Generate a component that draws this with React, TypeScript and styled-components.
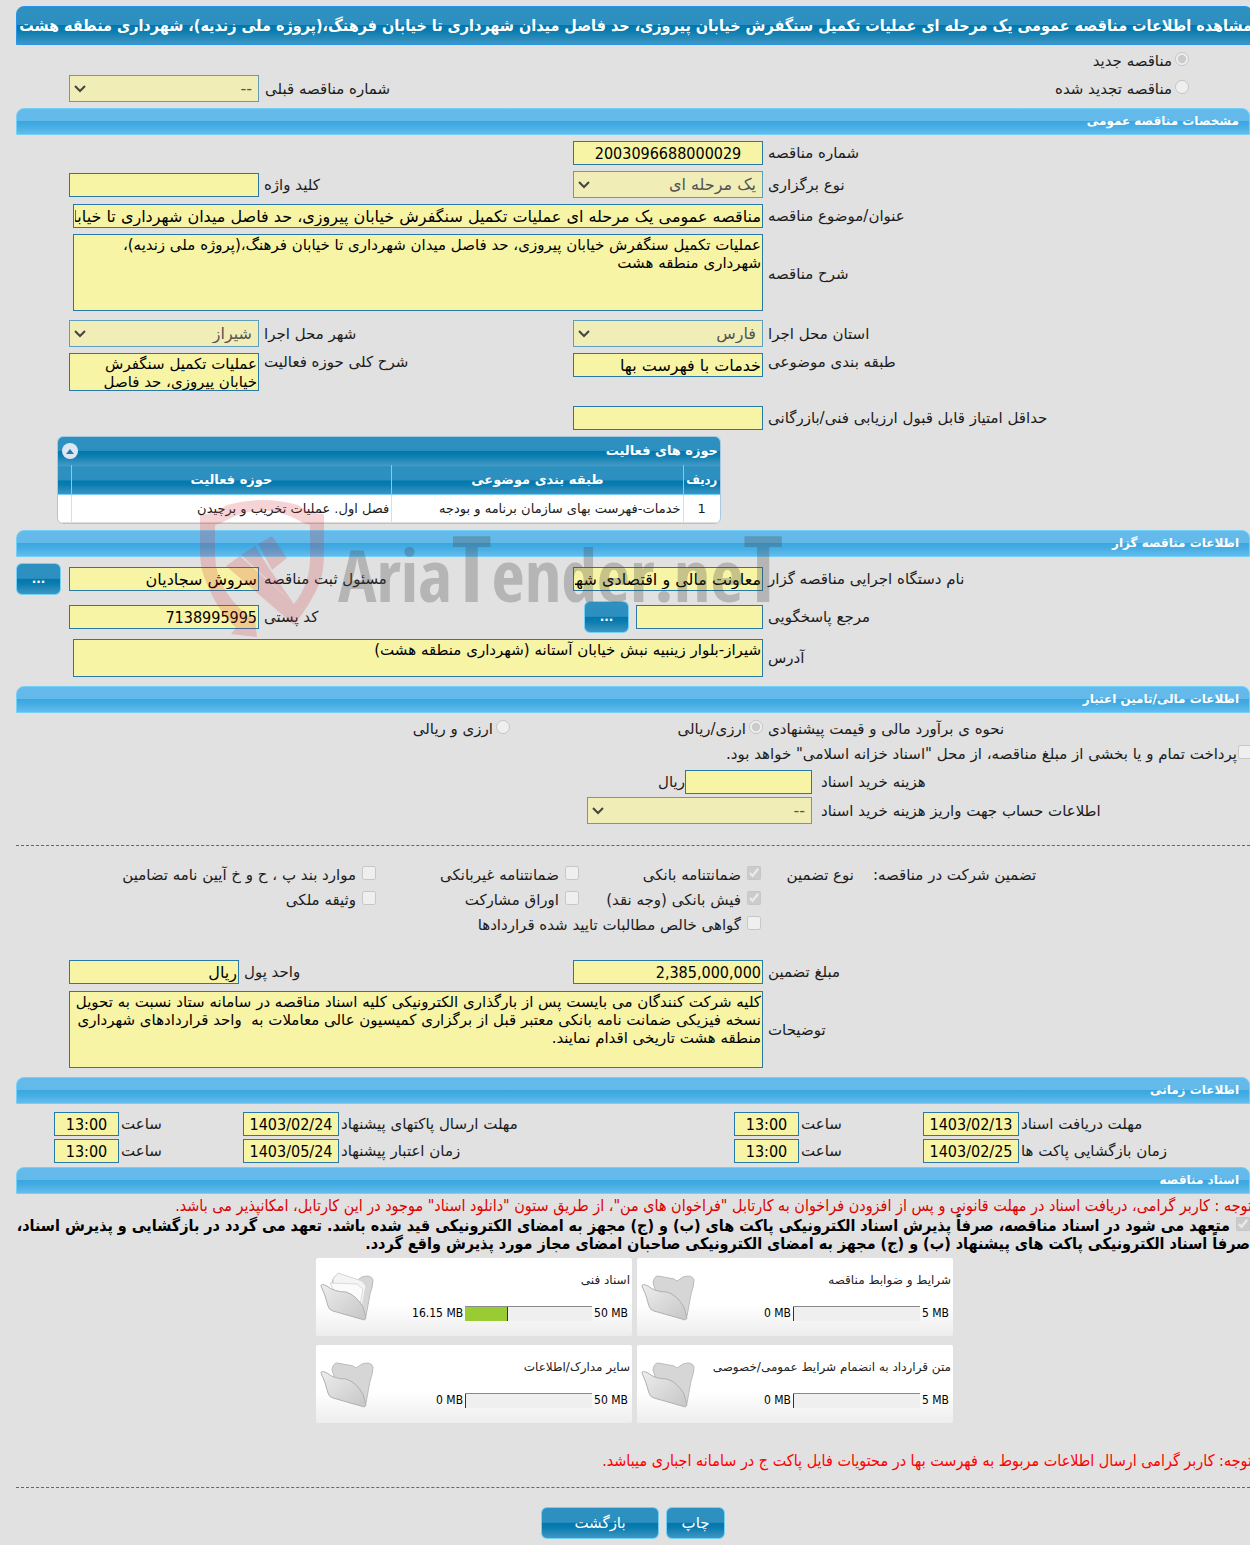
import React, { useId } from "react";
import styled, { createGlobalStyle, css } from "styled-components";

const colors = {
  page: "#e1e1e1",
  field: "#f7f4a5",
  fieldOff: "#f0eeb6",
  border: "#2779aa",
  borderOff: "#5f9dbd",
  text: "#1c1c1c",
};

const fonts = {
  text: '"DejaVu Sans", sans-serif',
  narrow: '"DejaVu Sans Condensed", "DejaVu Sans", sans-serif',
};

const deepGradient = "linear-gradient(#2d91c0 0, #2d8fbf 48%, #0078ae 50%, #0a7cb0 65%, #3f97c2 100%)";
const skyGradient = "linear-gradient(#63bbeb 0, #63b9ea 48%, #3aa7e1 50%, #45ace3 68%, #63bdee 100%)";

const GlobalStyle = createGlobalStyle`
  *, *::before, *::after { box-sizing: border-box; }
  body {
    margin: 0;
    background: ${colors.page};
    color: ${colors.text};
    font-family: ${fonts.text};
    font-size: 15px;
    line-height: 18px;
  }
  input, select, textarea, button { font-family: inherit; margin: 0; }
`;

const Page = styled.main`
  direction: rtl;
  padding: 6px 0 6px 16px;
  overflow: hidden;
`;

const TitleBar = styled.h1`
  display: flex;
  align-items: center;
  height: 39px;
  margin: 0 -3px 0 0;
  border: 1px solid #2694e8;
  border-radius: 8px 8px 0 0;
  background: ${deepGradient};
  color: #fff;
  font-family: ${fonts.narrow};
  font-size: 16px;
  font-weight: bold;
  white-space: nowrap;
`;

const Section = styled.section`
  position: relative;
`;

const SectionBar = styled.h2`
  height: 27px;
  margin: 0;
  padding: 0 10px;
  border: 1px solid #74d0f7;
  border-radius: 8px 8px 0 0;
  background: ${skyGradient};
  color: #fff;
  font-size: 12px;
  line-height: 25px;
  font-weight: bold;
`;

const FormGrid = styled.div<{ $rowGap?: number; $end?: number }>`
  display: grid;
  grid-template-columns: minmax(0, 482fr) 190px minmax(0, 304fr) 190px 48px;
  column-gap: 5px;
  row-gap: ${(p) => p.$rowGap ?? 6}px;
  align-items: center;
  padding: 6px 0 ${(p) => p.$end ?? 9}px;
`;

const Label = styled.label<{ $first?: boolean; $top?: boolean }>`
  text-align: left;
  white-space: nowrap;
  ${(p) => p.$first && css`grid-column: 1;`}
  ${(p) => p.$top && css`align-self: start;`}
`;

const fieldStyle = css`
  border: 1px solid ${colors.border};
  border-radius: 0;
  background: ${colors.field};
  color: #000;
`;

const TextBox = styled.input<{ $w?: number; $center?: boolean; $digits?: boolean; $top?: boolean }>`
  ${fieldStyle}
  width: ${(p) => (p.$w ? p.$w + "px" : "100%")};
  height: 24px;
  padding: 1px;
  font-family: ${(p) => (p.$digits ? fonts.narrow : fonts.text)};
  font-size: 16px;
  text-align: ${(p) => (p.$center ? "center" : "right")};
  ${(p) => p.$top && css`align-self: start;`}
`;

const TextArea = styled.textarea<{ $h: number; $after?: number }>`
  ${fieldStyle}
  display: block;
  width: 100%;
  height: ${(p) => p.$h}px;
  margin-bottom: ${(p) => p.$after ?? 0}px;
  padding: 1px;
  font-size: 15px;
  line-height: 18px;
  resize: none;
  overflow: hidden;
`;

const Wide = styled.div<{ $inset?: boolean }>`
  grid-column: 2 / 5;
  display: flex;
  padding-left: ${(p) => (p.$inset ? 4 : 0)}px;
`;

const SelectWrap = styled.div`
  position: relative;
  display: flex;
  svg {
    position: absolute;
    left: 5px;
    top: 9px;
    pointer-events: none;
  }
`;

const SelectBox = styled.select`
  appearance: none;
  width: 100%;
  height: 27px;
  padding: 0 6px 0 20px;
  border: 1px solid ${colors.borderOff};
  border-radius: 0;
  background: ${colors.fieldOff};
  color: #545454;
  font-size: 16px;
  opacity: 1;
`;

const Spacer = styled.div<{ $h: number }>`
  height: ${(p) => p.$h}px;
`;

const buttonStyle = css`
  border: 1px solid #74d0f7;
  border-radius: 6px;
  background: ${deepGradient};
  color: #fff;
  height: 32px;
`;

const MoreButton = styled.button`
  ${buttonStyle}
  width: 45px;
  padding: 0;
  font-size: 12px;
  font-weight: bold;
  justify-self: end;
`;

const ActionButton = styled.button<{ $w: number }>`
  ${buttonStyle}
  width: ${(p) => p.$w}px;
  font-size: 15px;
`;

const Choice = styled.label<{ $span?: number; $gap?: number }>`
  display: flex;
  align-items: center;
  gap: ${(p) => p.$gap ?? 6}px;
  white-space: nowrap;
  grid-column: ${(p) => (p.$span ? "span " + p.$span : "auto")};
  input {
    flex: none;
    align-self: flex-start;
    width: 14px;
    height: 14px;
  }
`;

const TenderKind = styled.div`
  display: grid;
  grid-template-columns: minmax(0, 61fr) minmax(0, 799fr) minmax(0, 131fr) 190px 53px;
  row-gap: 1px;
  padding: 3px 0 6px;
  align-items: center;
`;

const KindChoice = styled.div`
  grid-column: 2;
  padding: 4px 0;
`;

const PriorNumber = styled.div`
  display: grid;
  grid-template-columns: subgrid;
  grid-column: 3 / 5;
  align-items: center;
  label { padding-left: 6px; }
`;

/* Activity table */

const ActivityPanel = styled.div`
  width: calc(100% - 570px);
  min-width: 560px;
  margin: 0 auto 6px 41px;
  border: 1px solid #a6c9e2;
  border-radius: 6px;
  background: #fff;
  overflow: hidden;
`;

const ActivityHead = styled.div`
  display: flex;
  justify-content: space-between;
  align-items: center;
  height: 28px;
  padding: 0 2px 0 4px;
  background: ${deepGradient};
  color: #fff;
  font-size: 13px;
  font-weight: bold;
`;

const CollapseButton = styled.button`
  display: grid;
  place-items: center;
  width: 16px;
  height: 16px;
  padding: 0;
  border: 0;
  border-radius: 8px;
  background: #dbe8f4;
`;

const ActivityTable = styled.table`
  width: 100%;
  border-collapse: collapse;
  table-layout: fixed;
  th {
    height: 29px;
    padding: 0;
    border-top: 1px solid #4297d7;
    border-bottom: 1px solid #74d0f7;
    border-left: 1px solid #74d0f7;
    background: ${deepGradient};
    color: #fff;
    font-size: 13px;
    font-weight: bold;
    white-space: nowrap;
  }
  th:first-child { font-family: ${fonts.narrow}; }
  td {
    height: 28px;
    padding: 0 2px;
    border-left: 1px solid #dddddd;
    border-bottom: 1px solid #dddddd;
    font-size: 13px;
    white-space: nowrap;
    overflow: hidden;
  }
  th:last-child, td:last-child { border-left: 0; }
  td:first-child { text-align: center; }
`;

/* Watermark over the organiser section */

const Watermark = styled.svg`
  position: absolute;
  left: 184px;
  top: -32px;
  width: 620px;
  height: 140px;
  pointer-events: none;
`;

/* Finance section */

const MethodRow = styled.div`
  display: grid;
  grid-template-columns: minmax(0, 482fr) minmax(0, 248fr) minmax(0, 494fr);
  column-gap: 5px;
  align-items: center;
  height: 25px;
  margin-top: 3px;
`;

const Bleed = styled.div`
  display: flex;
  align-items: center;
  height: 25px;
  margin-right: -2px;
`;

const PurchaseGrid = styled.div`
  display: grid;
  grid-template-columns: minmax(0, 429fr) 225px minmax(0, 562fr);
  column-gap: 9px;
  row-gap: 3px;
  align-items: center;
  padding: 4px 0 21px;
`;

const FieldPair = styled.div`
  display: flex;
  align-items: center;
  gap: 7px;
`;

const CurrencyCell = styled.div`
  grid-column: 3 / 5;
  display: flex;
  align-items: center;
  justify-content: flex-end;
  gap: 5px;
`;

const AmountCell = styled.div`
  display: flex;
  align-items: center;
`;

const Divider = styled.hr`
  margin: 0;
  border: 0;
  border-top: 1px dashed ${colors.border};
`;

const GuaranteeGrid = styled.div`
  display: grid;
  grid-template-columns: minmax(0, 377fr) minmax(0, 112fr) minmax(0, 182fr) minmax(0, 203fr) minmax(0, 360fr);
  grid-auto-rows: 25px;
  align-items: center;
  padding: 16px 0 17px;
`;

const GroupTitle = styled.span`
  text-align: left;
`;

const GroupKind = styled.span`
  padding-right: 19px;
`;

/* Timing */

const TimeGrid = styled.div`
  display: grid;
  grid-template-columns:
    minmax(0, 229fr) 96px minmax(0, 120fr) 65px minmax(0, 391fr) 96px minmax(0, 120fr) 65px minmax(0, 36fr);
  gap: 3px 2px;
  align-items: center;
  padding: 8px 0 4px;
  ${Label}:nth-of-type(4n + 1) { grid-column: 1; }
`;

/* Documents */

const Notice = styled.p<{ $bright?: boolean }>`
  margin: 0 -2px 0 0;
  color: ${(p) => (p.$bright ? "#ff0000" : "#dd0000")};
  font-family: ${fonts.narrow};
  font-size: 16px;
  line-height: 23px;
  white-space: nowrap;
`;

const Pledge = styled.label`
  display: block;
  color: #000;
  font-family: ${fonts.narrow};
  font-size: 16px;
  font-weight: bold;
  line-height: 18px;
  input {
    width: 14px;
    height: 14px;
    margin-left: 1px;
    vertical-align: 0;
  }
`;

const CardGrid = styled.div`
  display: grid;
  grid-template-columns: 316px 316px;
  justify-content: center;
  gap: 9px 5px;
  padding: 5px 0 26px 3px;
`;

const Card = styled.article`
  display: flex;
  justify-content: space-between;
  height: 78px;
  padding: 14px 2px 0 4px;
  border-radius: 2px;
  background: linear-gradient(#ffffff 0, #ffffff 60%, #ededed 100%);
  color: #000;
`;

const CardBody = styled.div`
  font-family: ${fonts.narrow};
  font-size: 12px;
  line-height: 16px;
`;

const CardTitle = styled.h3`
  margin: 0 0 17px;
  font-family: ${fonts.text};
  font-size: 12px;
  font-weight: normal;
  color: #222;
`;

const Usage = styled.div`
  display: flex;
  direction: ltr;
  justify-content: flex-end;
  align-items: center;
  gap: 2px;
  padding-right: 2px;
`;

const Track = styled.div`
  width: 127px;
  height: 15px;
  border-top: 1px solid #8a8a8a;
  background: #efefef;
`;

const Fill = styled.div`
  height: 100%;
  border-right: 1px solid #333;
  background: #99cc33;
`;

const Actions = styled.div`
  display: flex;
  justify-content: center;
  gap: 7px;
  padding-top: 19px;
`;

function Select({ id, value }: { id: string; value: string }) {
  return (
    <SelectWrap>
      <SelectBox id={id} disabled defaultValue={value}>
        <option>{value}</option>
      </SelectBox>
      <svg width="12" height="10" viewBox="0 0 12 10" fill="none" stroke="#444" strokeWidth="2">
        <path d="M1 2 L6 7 L11 2" />
      </svg>
    </SelectWrap>
  );
}

function Tick({ text, checked, span }: { text: string; checked?: boolean; span?: number }) {
  return (
    <Choice $span={span}>
      <input type="checkbox" disabled defaultChecked={checked} />
      {text}
    </Choice>
  );
}

function TimePair({ name, date, time }: { name: string; date: string; time: string }) {
  const id = useId();
  return (
    <>
      <Label htmlFor={id + "d"}>{name}</Label>
      <TextBox id={id + "d"} readOnly $center $digits defaultValue={date} />
      <Label htmlFor={id + "t"}>ساعت</Label>
      <TextBox id={id + "t"} readOnly $center $digits defaultValue={time} />
    </>
  );
}

function Folder({ filled }: { filled?: boolean }) {
  const id = useId();
  return (
    <svg width="54" height="50" viewBox="0 0 54 50">
      <defs>
        <linearGradient id={id} x1="0" y1="0" x2="1" y2="1">
          <stop offset="0" stopColor="#ededed" />
          <stop offset="1" stopColor="#c6c6c6" />
        </linearGradient>
      </defs>
      <path
        d="M12 11 Q13 4 17 4 L28 6 Q33 6 36 9 L42 5 Q51 2 53 8 Q53 14 50 22 L46 44 L20 34 Z"
        fill="#d6d6d6"
        stroke="#bcbcbc"
      />
      {filled && (
        <>
          <path d="M13 7 L18 1 L42 9 L46 14 L42 35 L15 22 Z" fill="#f4f4f4" stroke="#d6d6d6" />
          <path d="M10 11 L37 12 L43 17 L40 33 L16 22 Z" fill="#fbfbfb" stroke="#dadada" />
        </>
      )}
      <path
        d="M1 14 Q1 11 7 14 Q14 20 26 20 Q36 23 43 35 L46 46 Q45 49 41 47 L13 39 Q9 38 8 34 Q5 22 1 14 Z"
        fill={`url(#${id})`}
        stroke="#b0b0b0"
      />
    </svg>
  );
}

const documents = [
  { title: "شرایط و ضوابط مناقصه", used: "0 MB", limit: "5 MB", share: 0 },
  { title: "اسناد فنی", used: "16.15 MB", limit: "50 MB", share: 34 },
  { title: "متن قرارداد به انضمام شرایط عمومی/خصوصی", used: "0 MB", limit: "5 MB", share: 0 },
  { title: "سایر مدارک/اطلاعات", used: "0 MB", limit: "50 MB", share: 0 },
];

export default function App() {
  return (
    <Page dir="rtl" lang="fa">
      <GlobalStyle />
      <TitleBar>
        مشاهده اطلاعات مناقصه عمومی یک مرحله ای عملیات تکمیل سنگفرش خیابان پیروزی، حد فاصل میدان شهرداری تا خیابان فرهنگ،(پروژه ملی زندیه)، شهرداری منطقه هشت
      </TitleBar>

      <TenderKind>
        <KindChoice>
          <Choice $gap={3}>
            <input type="radio" name="kind" disabled defaultChecked />
            مناقصه جدید
          </Choice>
        </KindChoice>
        <KindChoice>
          <Choice $gap={3}>
            <input type="radio" name="kind" disabled />
            مناقصه تجدید شده
          </Choice>
        </KindChoice>
        <PriorNumber>
          <Label htmlFor="prior">شماره مناقصه قبلی</Label>
          <Select id="prior" value="--" />
        </PriorNumber>
      </TenderKind>

      <Section>
        <SectionBar>مشخصات مناقصه عمومی</SectionBar>
        <FormGrid $end={6}>
          <Label $first htmlFor="number">شماره مناقصه</Label>
          <TextBox id="number" readOnly $center $digits defaultValue="2003096688000029" />

          <Label $first htmlFor="type">نوع برگزاری</Label>
          <Select id="type" value="یک مرحله ای" />
          <Label htmlFor="keyword">کلید واژه</Label>
          <TextBox id="keyword" readOnly />

          <Label $first htmlFor="subject">عنوان/موضوع مناقصه</Label>
          <Wide $inset>
            <TextBox
              id="subject"
              readOnly
              defaultValue="مناقصه عمومی یک مرحله ای عملیات تکمیل سنگفرش خیابان پیروزی، حد فاصل میدان شهرداری تا خیابان فرهنگ،(پروژه ملی زندیه)، شهرداری منطقه هشت"
            />
          </Wide>

          <Label $first htmlFor="description">شرح مناقصه</Label>
          <Wide $inset>
            <TextArea
              id="description"
              readOnly
              $h={77}
              $after={3}
              defaultValue="عملیات تکمیل سنگفرش خیابان پیروزی، حد فاصل میدان شهرداری تا خیابان فرهنگ،(پروژه ملی زندیه)، شهرداری منطقه هشت"
            />
          </Wide>

          <Label $first htmlFor="province">استان محل اجرا</Label>
          <Select id="province" value="فارس" />
          <Label htmlFor="city">شهر محل اجرا</Label>
          <Select id="city" value="شیراز" />

          <Label $first $top htmlFor="category">طبقه بندی موضوعی</Label>
          <TextBox id="category" readOnly $top defaultValue="خدمات با فهرست بها" />
          <Label $top htmlFor="field">شرح کلی حوزه فعالیت</Label>
          <TextArea id="field" readOnly $h={38} $after={9} defaultValue="عملیات تکمیل سنگفرش خیابان پیروزی، حد فاصل" />

          <Label $first htmlFor="score">حداقل امتیاز قابل قبول ارزیابی فنی/بازرگانی</Label>
          <TextBox id="score" readOnly />
        </FormGrid>

        <ActivityPanel>
          <ActivityHead>
            حوزه های فعالیت
            <CollapseButton aria-label="بستن">
              <svg width="8" height="5" viewBox="0 0 8 5"><path d="M0 5 L4 0 L8 5 Z" fill="#2779aa" /></svg>
            </CollapseButton>
          </ActivityHead>
          <ActivityTable>
            <colgroup>
              <col style={{ width: 37 }} />
              <col style={{ width: "44%" }} />
              <col />
              <col style={{ width: 13 }} />
            </colgroup>
            <thead>
              <tr>
                <th>ردیف</th>
                <th>طبقه بندی موضوعی</th>
                <th>حوزه فعالیت</th>
                <th />
              </tr>
            </thead>
            <tbody>
              <tr>
                <td>1</td>
                <td>خدمات-فهرست بهای سازمان برنامه و بودجه</td>
                <td>فصل اول. عملیات تخریب و برچیدن</td>
                <td />
              </tr>
            </tbody>
          </ActivityTable>
        </ActivityPanel>
      </Section>

      <Section>
        <SectionBar>اطلاعات مناقصه گزار</SectionBar>
        <FormGrid>
          <Label $first htmlFor="agency">نام دستگاه اجرایی مناقصه گزار</Label>
          <TextBox id="agency" readOnly defaultValue="معاونت مالی و اقتصادی شهرداری شیراز" />
          <Label htmlFor="registrar">مسئول ثبت مناقصه</Label>
          <TextBox id="registrar" readOnly defaultValue="سروش سجادیان" />
          <MoreButton>...</MoreButton>

          <Label $first htmlFor="contact">مرجع پاسخگویی</Label>
          <FieldPair>
            <TextBox id="contact" readOnly $w={127} />
            <MoreButton>...</MoreButton>
          </FieldPair>
          <Label htmlFor="postcode">کد پستی</Label>
          <TextBox id="postcode" readOnly $digits defaultValue="7138995995" />

          <Label $first htmlFor="address">آدرس</Label>
          <Wide $inset>
            <TextArea id="address" readOnly $h={38} defaultValue="شیراز-بلوار زینبیه نبش خیابان آستانه (شهرداری منطقه هشت)" />
          </Wide>
        </FormGrid>
        <Watermark viewBox="0 0 620 140" aria-hidden="true">
          <g fill="#d22630" fillOpacity="0.2">
            <path
              fillRule="evenodd"
              d="M0 17 Q14 16 27 7 Q62 -3 98 7 Q110 16 124 16 V55 Q124 72 120 84 Q112 104 94 127 L26 68 L40 58 L94 106 Q110 86 110 60 V27 Q104 26 98 22 Q62 3 27 22 Q21 26 15 27 V55 Q15 78 27 95 Q38 112 55 122 L57 139 L31 136 L36 130 Q16 110 8 88 Q0 72 0 55 Z"
            />
            <path d="M41 57 L55 48 L71 73 L94 106 Z" />
            <path d="M58 46 L72 38 L87 60 L72 72 Z" />
          </g>
          <text
            x="138"
            y="104"
            direction="ltr"
            textAnchor="start"
            fill="#444"
            fillOpacity="0.28"
            fontFamily="'Open Sans Condensed', 'Liberation Sans Narrow', Roboto, sans-serif"
            fontWeight="bold"
            fontSize="72"
          >
            Aria<tspan fontSize="92">T</tspan>ender.ne<tspan fontSize="92">T</tspan>
          </text>
        </Watermark>
      </Section>

      <Section>
        <SectionBar>اطلاعات مالی/تامین اعتبار</SectionBar>
        <MethodRow>
          <GroupTitle>نحوه ی برآورد مالی و قیمت پیشنهادی</GroupTitle>
          <Choice $gap={3}>
            <input type="radio" name="method" disabled defaultChecked />
            ارزی/ریالی
          </Choice>
          <Choice $gap={3}>
            <input type="radio" name="method" disabled />
            ارزی و ریالی
          </Choice>
        </MethodRow>
        <Bleed>
          <Choice $gap={1}>
            <input type="checkbox" disabled />
            پرداخت تمام و یا بخشی از مبلغ مناقصه، از محل "اسناد خزانه اسلامی" خواهد بود.
          </Choice>
        </Bleed>
        <PurchaseGrid>
          <Label $first htmlFor="docfee">هزینه خرید اسناد</Label>
          <AmountCell>
            <TextBox id="docfee" readOnly $w={127} />
            ریال
          </AmountCell>
          <Label $first htmlFor="account">اطلاعات حساب جهت واریز هزینه خرید اسناد</Label>
          <Select id="account" value="--" />
        </PurchaseGrid>
        <Divider />
        <GuaranteeGrid>
          <GroupTitle>تضمین شرکت در مناقصه:</GroupTitle>
          <GroupKind>نوع تضمین</GroupKind>
          <Tick text="ضمانتنامه بانکی" checked />
          <Tick text="ضمانتنامه غیربانکی" />
          <Tick text="موارد بند پ ، ح و خ آیین نامه تضامین" />
          <span />
          <span />
          <Tick text="فیش بانکی (وجه نقد)" checked />
          <Tick text="اوراق مشارکت" />
          <Tick text="وثیقه ملکی" />
          <span />
          <span />
          <Tick text="گواهی خالص مطالبات تایید شده قراردادها" span={3} />
        </GuaranteeGrid>
        <FormGrid $rowGap={7}>
          <Label $first htmlFor="amount">مبلغ تضمین</Label>
          <TextBox id="amount" readOnly $digits defaultValue="2,385,000,000" />
          <CurrencyCell>
            <Label htmlFor="currency">واحد پول</Label>
            <TextBox id="currency" readOnly $w={170} defaultValue="ریال" />
          </CurrencyCell>

          <Label $first htmlFor="notes">توضیحات</Label>
          <Wide>
            <TextArea
              id="notes"
              readOnly
              $h={77}
              defaultValue="کلیه شرکت کنندگان می بایست پس از بارگذاری الکترونیکی کلیه اسناد مناقصه در سامانه ستاد نسبت به تحویل نسخه فیزیکی ضمانت نامه بانکی معتبر قبل از برگزاری کمیسیون عالی معاملات به  واحد قراردادهای شهرداری منطقه هشت تاریخی اقدام نمایند."
            />
          </Wide>
        </FormGrid>
      </Section>

      <Section>
        <SectionBar>اطلاعات زمانی</SectionBar>
        <TimeGrid>
          <TimePair name="مهلت دریافت اسناد" date="1403/02/13" time="13:00" />
          <TimePair name="مهلت ارسال پاکتهای پیشنهاد" date="1403/02/24" time="13:00" />
          <TimePair name="زمان بازگشایی پاکت ها" date="1403/02/25" time="13:00" />
          <TimePair name="زمان اعتبار پیشنهاد" date="1403/05/24" time="13:00" />
        </TimeGrid>
      </Section>

      <Section>
        <SectionBar>اسناد مناقصه</SectionBar>
        <Notice>
          توجه : کاربر گرامی، دریافت اسناد در مهلت قانونی و پس از افزودن فراخوان به کارتابل "فراخوان های من"، از طریق ستون "دانلود اسناد" موجود در این کارتابل، امکانپذیر می باشد.
        </Notice>
        <Pledge>
          <input type="checkbox" disabled defaultChecked />{" "}
          متعهد می شود در اسناد مناقصه، صرفاً پذیرش اسناد الکترونیکی پاکت های (ب) و (ج) مجهز به امضای الکترونیکی قید شده باشد. تعهد می گردد در بازگشایی و پذیرش اسناد، صرفاً اسناد الکترونیکی پاکت های پیشنهاد (ب) و (ج) مجهز به امضای الکترونیکی صاحبان امضای مجاز مورد پذیرش واقع گردد.
        </Pledge>
        <CardGrid>
          {documents.map((d) => (
            <Card key={d.title}>
              <CardBody>
                <CardTitle>{d.title}</CardTitle>
                <Usage>
                  <span>{d.used}</span>
                  <Track>
                    <Fill style={{ width: d.share + "%" }} />
                  </Track>
                  <span>{d.limit}</span>
                </Usage>
              </CardBody>
              <Folder filled={d.share > 0} />
            </Card>
          ))}
        </CardGrid>
        <Notice $bright>
          توجه: کاربر گرامی ارسال اطلاعات مربوط به فهرست بها در محتویات فایل پاکت ج در سامانه اجباری میباشد.
        </Notice>
        <Spacer $h={15} />
        <Divider />
        <Actions>
          <ActionButton $w={59}>چاپ</ActionButton>
          <ActionButton $w={118}>بازگشت</ActionButton>
        </Actions>
      </Section>
    </Page>
  );
}
